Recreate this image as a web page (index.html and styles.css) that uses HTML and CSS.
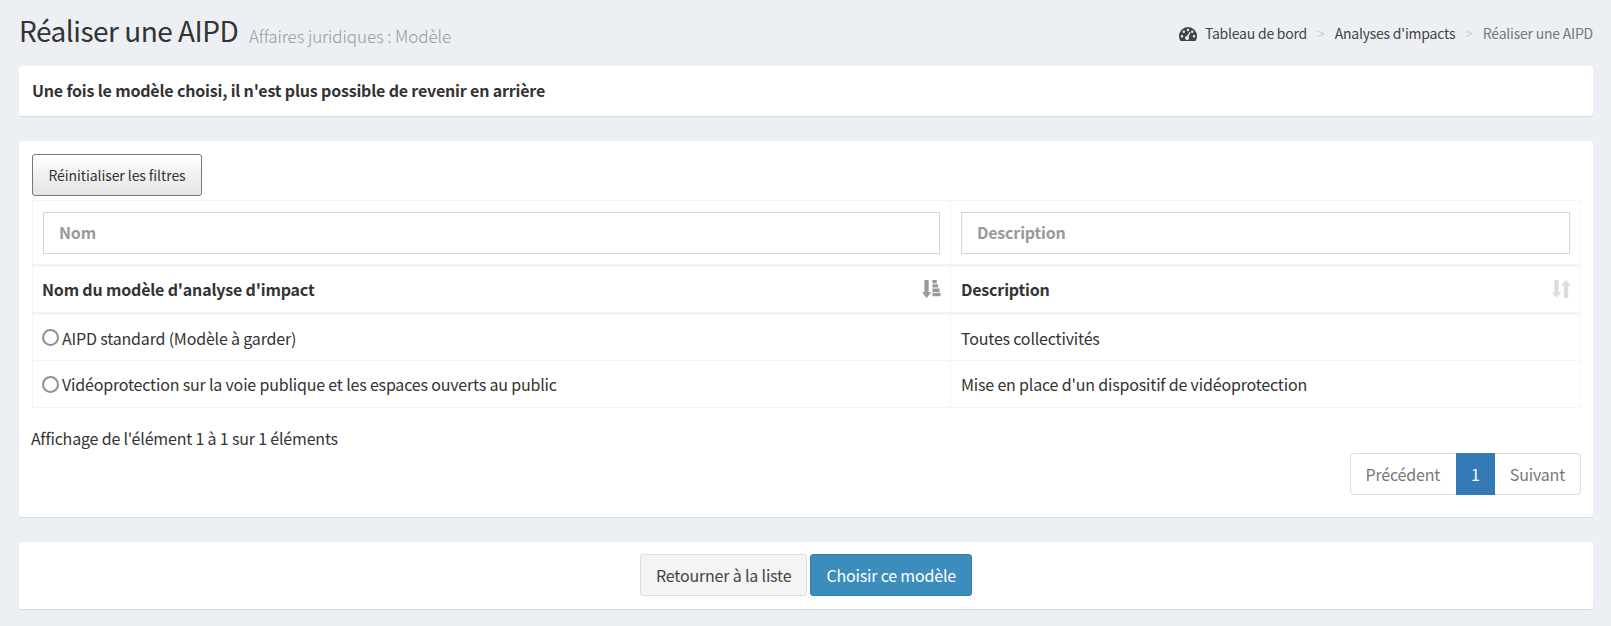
FILE: index.html
```html
<!DOCTYPE html>
<html lang="fr">
<head>
    <meta charset="UTF-8">
    <link rel="stylesheet" href="styles.css">
    <title>Réaliser une AIPD</title>
</head>
<body>
    <header class="page-header">
        <h1>Réaliser une AIPD <small>Affaires juridiques : Modèle</small></h1>
        <ol class="breadcrumb">
            <li>
                <svg class="icon-dashboard" viewBox="0 0 18 14"><path fill-rule="evenodd" d="M9 0a9 9 0 0 1 9 9c0 1.800-.5 3.400-1.400 4.800l-.3.2H1.700l-.3-.2A9 9 0 0 1 0 9a9 9 0 0 1 9-9zM3 8a1.200 1.200 0 1 0 0 2.400A1.200 1.200 0 0 0 3 8zm1.800-4.400a1.200 1.200 0 1 0 0 2.400 1.200 1.200 0 0 0 0-2.400zM9 1.800a1.200 1.200 0 1 0 0 2.400A1.200 1.200 0 0 0 9 1.800zM13.200 3.600a1.200 1.200 0 1 0 0 2.400 1.200 1.200 0 0 0 0-2.400zM15 8a1.200 1.200 0 1 0 0 2.400A1.200 1.200 0 0 0 15 8zM10.700 4.700 8.100 9.100a1.900 1.900 0 1 0 1.500.8l2-4.800z"/></svg>
                <a href="#">Tableau de bord</a>
            </li>
            <li><a href="#">Analyses d'impacts</a></li>
            <li class="current">Réaliser une AIPD</li>
        </ol>
    </header>

    <section class="box box-notice">
        <strong>Une fois le modèle choisi, il n'est plus possible de revenir en arrière</strong>
    </section>

    <section class="box box-list">
        <button class="btn-reset" type="button">Réinitialiser les filtres</button>
        <table class="models">
            <thead>
                <tr class="filters">
                    <th class="col-name"><input type="text" placeholder="Nom"></th>
                    <th><input type="text" placeholder="Description"></th>
                </tr>
                <tr class="titles">
                    <th>
                        <div class="title-cell">
                            Nom du modèle d'analyse d'impact
                            <svg class="sort sort-active" viewBox="0 0 20 20"><path d="M2.500 0H7v13h3l-5.250 6L0 13h2.500zM11 0h4.500v3.500H11zM11 4.500h6V8h-6zM11 9h7.500v3.500H11zM11 13.500h8.500V17H11z"/></svg>
                        </div>
                    </th>
                    <th>
                        <div class="title-cell">
                            Description
                            <svg class="sort" viewBox="0 0 20 20"><path d="M2.500 0H7v13h3l-5.250 6L0 13h2.500zM12.500 19H17V6h3L14.750 0 9.500 6h3z"/></svg>
                        </div>
                    </th>
                </tr>
            </thead>
            <tbody>
                <tr>
                    <td><label class="model"><input type="radio" name="model">AIPD standard (Modèle à garder)</label></td>
                    <td>Toutes collectivités</td>
                </tr>
                <tr>
                    <td><label class="model"><input type="radio" name="model">Vidéoprotection sur la voie publique et les espaces ouverts au public</label></td>
                    <td>Mise en place d'un dispositif de vidéoprotection</td>
                </tr>
            </tbody>
        </table>
        <div class="table-info">Affichage de l'élément 1 à 1 sur 1 éléments</div>
        <div class="pagination-row">
            <ul class="pagination">
                <li class="prev"><a href="#">Précédent</a></li>
                <li class="active"><a href="#">1</a></li>
                <li><a href="#">Suivant</a></li>
            </ul>
        </div>
    </section>

    <section class="box box-actions">
        <a class="btn btn-default" href="#">Retourner à la liste</a>
        <button class="btn btn-primary" type="submit">Choisir ce modèle</button>
    </section>
</body>
</html>
```

FILE: styles.css
```css
* {
    box-sizing: border-box;
}
body {
    margin: 0;
    padding: 0 18px 16px 19px;
    background-color: #ecf0f5;
    color: #333;
    font-family: "Noto Sans CJK SC", "Noto Sans", sans-serif;
    font-size: 16px;
    line-height: 22px;
    letter-spacing: -0.18px;
}
a {
    color: inherit;
    text-decoration: none;
}

.page-header {
    display: flex;
    justify-content: space-between;
    align-items: center;
    height: 66px;
}
.page-header h1 {
    margin: 0 0 1px;
    font-size: 28px;
    font-weight: 400;
    line-height: 36px;
    letter-spacing: -0.5px;
}
.page-header small {
    margin-left: 5px;
    color: #999;
    font-size: 17px;
    font-weight: 300;
    letter-spacing: -0.1px;
    vertical-align: -1px;
}
.breadcrumb {
    display: flex;
    margin: 0;
    padding: 0;
    list-style: none;
    font-size: 14px;
    letter-spacing: -0.22px;
    color: #444;
}
.breadcrumb li + li::before {
    content: ">";
    padding: 0 10px;
    color: #ccc;
}
.breadcrumb .current {
    color: #777;
}
.icon-dashboard {
    width: 18px;
    height: 14px;
    margin-right: 5px;
    fill: #444;
    vertical-align: -2px;
}

.box {
    background-color: #fff;
    border-radius: 3px;
    box-shadow: 0 1px 1px rgba(0, 0, 0, 0.1);
    margin-bottom: 25px;
}
.box-notice {
    padding: 13px 13px;
    height: 50px;
}
.box-list {
    padding: 13px 12px 22px 13px;
}
.box-actions {
    display: flex;
    justify-content: center;
    gap: 3px;
    padding: 12px;
    height: 67px;
    margin-bottom: 0;
}

.btn-reset {
    display: block;
    width: 170px;
    height: 42px;
    margin-bottom: 4px;
    padding: 0;
    border: 1px solid #777;
    border-radius: 3px;
    background: linear-gradient(#fff, #e4e4e4);
    color: #333;
    font: inherit;
    font-size: 14px;
    letter-spacing: -0.08px;
}

.models {
    width: 100%;
    border-collapse: collapse;
    border: 1px solid #f4f4f4;
    table-layout: fixed;
}
.models th,
.models td {
    border: 1px solid #f4f4f4;
    text-align: left;
    padding: 0 10px;
}
.models th:first-child,
.models td:first-child {
    padding-left: 9px;
}
.models .filters th:first-child {
    padding-left: 10px;
}
.col-name {
    width: 918px;
}
.filters th {
    height: 65px;
    border-bottom-width: 3px;
}
.filters input {
    display: block;
    width: 100%;
    height: 42px;
    padding: 0 15px 2px;
    border: 1px solid #d2d6de;
    color: #333;
    font: inherit;
    font-weight: 700;
    letter-spacing: inherit;
}
.filters input::placeholder {
    color: #999;
}
.titles th {
    height: 48px;
    border-bottom-width: 3px;
    padding-bottom: 2px;
}
.title-cell {
    display: flex;
    justify-content: space-between;
    align-items: center;
}
.sort {
    width: 19px;
    height: 19px;
    margin: 1px -1px 0 0;
    fill: #ddd;
}
.sort-active {
    fill: #999;
}
.models td {
    height: 47px;
}
.model {
    display: flex;
    align-items: center;
}
.model input {
    appearance: none;
    width: 17px;
    height: 17px;
    margin: 0 3px 0 0;
    border: 2px solid #8f8f9d;
    border-radius: 50%;
}

.table-info {
    margin: 19px 0 0 -1px;
}
.pagination-row {
    display: flex;
    justify-content: flex-end;
    margin-top: 4px;
}
.pagination {
    display: flex;
    margin: 0;
    padding: 0;
    list-style: none;
    height: 42px;
    border: 1px solid #ddd;
    border-radius: 4px;
    color: #777;
}
.pagination a {
    display: block;
    padding: 9px 15px;
}
.pagination .prev a {
    padding: 9px 16px 9px 14px;
}
.pagination li.active {
    margin: -1px 0;
    height: 42px;
    background-color: #337ab7;
    color: #fff;
}
.pagination li.active a {
    padding: 10px 15px;
}

.btn {
    display: block;
    height: 42px;
    padding: 9px 15px;
    border: 1px solid;
    border-radius: 3px;
    font: inherit;
    letter-spacing: inherit;
}
.btn-default {
    background-color: #f4f4f4;
    border-color: #ddd;
    color: #444;
}
.btn-primary {
    background-color: #3c8dbc;
    border-color: #367fa9;
    color: #fff;
}
```
